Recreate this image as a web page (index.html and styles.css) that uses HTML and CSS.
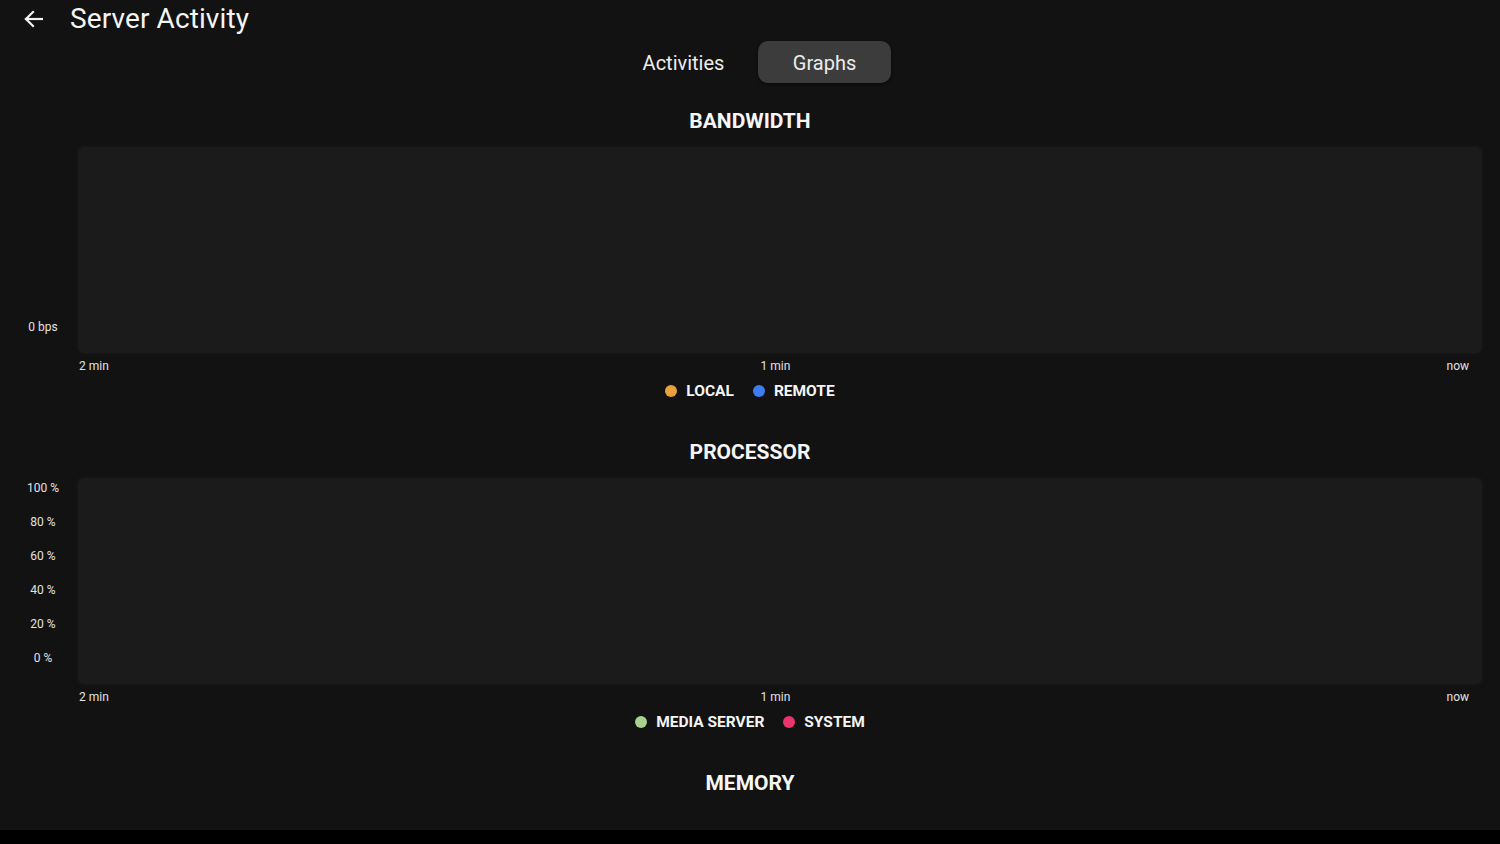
FILE: index.html
```html
<!DOCTYPE html>
<html lang="en">
<head>
<meta charset="utf-8">
<title>Server Activity</title>
<link rel="stylesheet" href="styles.css">
</head>
<body>
<div class="screen">
  <header class="topbar">
    <button class="back" aria-label="Back">
      <svg width="20" height="18" viewBox="0 0 20 18" fill="none" stroke="#f2f2f2" stroke-width="2.2" stroke-linecap="square" stroke-linejoin="miter"><path d="M3 9H19"/><path d="M10 2L3 9L10 16"/></svg>
    </button>
    <h1 class="title">Server Activity</h1>
  </header>

  <nav class="tabs">
    <span class="tab">Activities</span>
    <span class="tab tab-active">Graphs</span>
  </nav>

  <section class="graph">
    <h2 class="graph-title">BANDWIDTH</h2>
    <div class="graph-body">
      <div class="y-axis y-axis-bottom">
        <span>0 bps</span>
      </div>
      <div class="plot"></div>
    </div>
    <div class="x-axis">
      <span>2 min</span>
      <span class="x-mid">1 min</span>
      <span class="x-end">now</span>
    </div>
    <div class="legend">
      <span class="legend-item"><i class="dot dot-local"></i>LOCAL</span>
      <span class="legend-item"><i class="dot dot-remote"></i>REMOTE</span>
    </div>
  </section>

  <section class="graph graph-next">
    <h2 class="graph-title">PROCESSOR</h2>
    <div class="graph-body">
      <div class="y-axis">
        <span>100 %</span>
        <span>80 %</span>
        <span>60 %</span>
        <span>40 %</span>
        <span>20 %</span>
        <span>0 %</span>
      </div>
      <div class="plot"></div>
    </div>
    <div class="x-axis">
      <span>2 min</span>
      <span class="x-mid">1 min</span>
      <span class="x-end">now</span>
    </div>
    <div class="legend">
      <span class="legend-item"><i class="dot dot-media"></i>MEDIA SERVER</span>
      <span class="legend-item"><i class="dot dot-system"></i>SYSTEM</span>
    </div>
  </section>

  <section class="graph graph-next">
    <h2 class="graph-title">MEMORY</h2>
  </section>
</div>
<footer class="navbar"></footer>
</body>
</html>
```

FILE: styles.css
```css
* { box-sizing: border-box; }

html, body {
  margin: 0;
  padding: 0;
  background: #000;
}

body {
  width: 1500px;
  height: 844px;
  overflow: hidden;
  font-family: Roboto, "Noto Sans", "Liberation Sans", sans-serif;
  color: #f2f2f2;
}

.screen {
  height: 830px;
  background: #121212;
  overflow: hidden;
}

.navbar {
  height: 14px;
  background: #000;
}

.topbar {
  display: flex;
  align-items: center;
  height: 38px;
  padding-left: 23px;
}

.back {
  display: flex;
  align-items: center;
  justify-content: center;
  width: 20px;
  height: 20px;
  padding: 0;
  border: 0;
  background: none;
  margin-top: -1px;
}

.title {
  margin: 0 0 0 27px;
  font-size: 28px;
  font-weight: 400;
  line-height: 38px;
  letter-spacing: 0.1px;
  color: #f4f4f4;
}

.tabs {
  display: flex;
  justify-content: center;
  gap: 8px;
  padding-left: 8px;
  margin-top: 3px;
}

.tab {
  display: flex;
  align-items: center;
  justify-content: center;
  width: 133px;
  height: 42px;
  padding-top: 2px;
  font-size: 20px;
  color: #ececec;
  border-radius: 10px;
}

.tab-active {
  background: #3c3c3c;
  box-shadow: 0 1px 3px rgba(0, 0, 0, 0.6);
}

.graph {
  margin-top: 26px;
}

.graph-next {
  margin-top: 39px;
}

.graph-title {
  margin: 0;
  height: 24px;
  line-height: 24px;
  text-align: center;
  font-size: 21px;
  font-weight: 700;
  color: #f6f6f6;
}

.graph-body {
  display: grid;
  grid-template-columns: 78px 1fr;
  height: 206px;
  margin-top: 14px;
  padding-right: 18px;
}

.y-axis {
  display: flex;
  flex-direction: column;
  justify-content: space-between;
  align-items: center;
  padding: 3px 0 19px 8px;
  font-size: 12px;
  line-height: 14px;
  color: #e2e2e2;
}

.y-axis-bottom {
  justify-content: flex-end;
}

.plot {
  background: #1b1b1b;
  border-radius: 6px;
  box-shadow: 0 0 4px 1px rgba(27, 27, 27, 0.7);
}

.x-axis {
  display: grid;
  grid-template-columns: 1fr auto 1fr;
  margin-top: 6px;
  padding: 0 31px 0 79px;
  font-size: 12px;
  line-height: 14px;
  color: #e2e2e2;
}

.x-mid {
  padding-left: 3px;
}

.x-end {
  text-align: right;
}

.legend {
  display: flex;
  justify-content: center;
  gap: 19px;
  margin-top: 8px;
  height: 20px;
  line-height: 20px;
  font-size: 15.5px;
  font-weight: 700;
  color: #f4f4f4;
}

.legend-item {
  display: flex;
  align-items: center;
  gap: 9px;
}

.dot {
  display: block;
  width: 12px;
  height: 12px;
  border-radius: 50%;
}

.dot-local { background: #e9a23b; }
.dot-remote { background: #3f7cf2; }
.dot-media { background: #a6d18f; }
.dot-system { background: #e8356c; }
```
